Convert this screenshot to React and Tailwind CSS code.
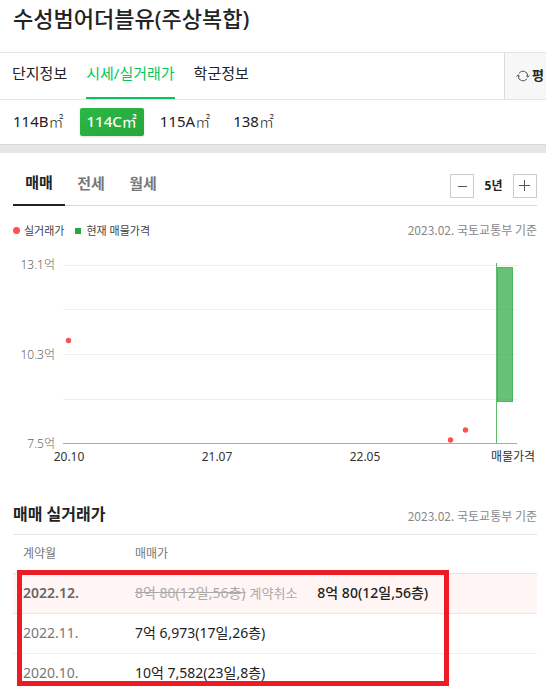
import React from "react";

const mainTabs = ["단지정보", "시세/실거래가", "학군정보"];
const areas = ["114B", "114C", "115A", "138"];
const gridLines = [20, 64, 109, 154];
const yLabels = [
  { y: 24, text: "13.1억" },
  { y: 114, text: "10.3억" },
  { y: 203, text: "7.5억" },
];
const xLabels = [
  { x: 69, text: "20.10" },
  { x: 217, text: "21.07" },
  { x: 365, text: "22.05" },
  { x: 513, text: "매물가격" },
];
const deals = [
  { x: 68.5, y: 95.5 },
  { x: 450.5, y: 195 },
  { x: 465.5, y: 185 },
];

function RefreshIcon() {
  return (
    <svg viewBox="0 0 14 14" className="size-[14px] shrink-0" fill="none" stroke="#555" aria-hidden="true">
      <path d="M2.2 6V7A4.8 4.8 0 0 0 11 9.7M11.8 8V7A4.8 4.8 0 0 0 3 4.3" strokeWidth="1" />
      <path d="M0.6 7.4L2.2 5.8L3.8 7.4M10.2 6.6L11.8 8.2L13.4 6.6" strokeWidth="1" />
    </svg>
  );
}

function SourceDate() {
  return (
    <span className="font-['Noto_Sans_CJK_KR',sans-serif] text-[12px] leading-5 text-[#888]">
      2023.02. 국토교통부 기준
    </span>
  );
}

function Chart() {
  return (
    <svg viewBox="0 0 546 230" className="block w-full" role="img" aria-label="실거래가">
      {gridLines.map((y) => (
        <rect key={y} x="63" y={y} width="454" height="1" fill="#eee" />
      ))}
      <rect x="63" y="198" width="454" height="1" fill="#aaa" />
      <rect x="496" y="18" width="1" height="180" fill="#5cbe6d" />
      <rect x="497" y="22" width="16" height="135" fill="#28a83c" fillOpacity="0.7" />
      <rect x="497.5" y="22.5" width="15" height="134" fill="none" stroke="#28a83c" strokeOpacity="0.4" />
      {deals.map((d) => (
        <circle key={d.x} cx={d.x} cy={d.y} r="2.7" fill="#ff5050" />
      ))}
      {yLabels.map((l) => (
        <text key={l.text} x="55" y={l.y} textAnchor="end" fontSize="12" fill="#666" className="font-light">
          {l.text}
        </text>
      ))}
      {xLabels.map((l) => (
        <text key={l.text} x={l.x} y="216" textAnchor="middle" fontSize="12" fill="#333">
          {l.text}
        </text>
      ))}
    </svg>
  );
}

export default function App() {
  return (
    <div className="relative flex h-screen flex-col overflow-hidden bg-white font-['Noto_Sans','Noto_Sans_CJK_KR',sans-serif] text-[#222]">
      <header className="flex h-[53px] shrink-0 items-start border-b border-[#e5e5e5] px-[13px] pt-0.5">
        <h1 className="text-[22px] leading-8 font-medium">수성범어더블유(주상복합)</h1>
      </header>

      <nav className="flex h-[47px] shrink-0 border-b border-[#e5e5e5] pl-3">
        <div className="flex gap-[19px]">
          {mainTabs.map((t, i) => (
            <a
              key={t}
              href="#"
              className={
                i === 1
                  ? "border-b-2 border-[#03c75a] pt-2 text-[15px] leading-6 text-[#03c75a]"
                  : "pt-2 text-[15px] leading-6"
              }
            >
              {t}
            </a>
          ))}
        </div>
        <button className="ml-auto flex w-[42px] items-center gap-0.5 border-l border-[#ddd] bg-[#f7f7f7] pl-[11px] text-[13px] font-bold">
          <RefreshIcon />평
        </button>
      </nav>

      <div className="flex h-[45px] shrink-0 items-center gap-[9px] border-b border-[#d5d7d9] pl-1.5">
        {areas.map((a, i) => (
          <button
            key={a}
            className={
              i === 1
                ? "h-7 rounded-xs bg-linear-to-br from-[#2ab943] to-[#28a53c] px-[7px] pb-0.5 text-[15px] leading-6 font-medium text-white shadow-sm"
                : "h-7 px-[7px] pb-0.5 text-[15px] leading-6"
            }
          >
            {a}
            <span className={i === 1 ? "font-normal" : "font-light"}>㎡</span>
          </button>
        ))}
      </div>
      <div className="h-2 shrink-0 bg-[#e5e6e8]" />

      <section className="shrink-0">
        <div className="mr-[9px] ml-[13px] flex h-[53px] items-end border-b border-[#d8d8d8]">
          <div className="flex h-full">
            <button className="-mb-px w-[52px] border-b-2 border-[#222] pt-2 text-[15px] font-bold">매매</button>
            <button className="w-[52px] pt-2 text-[15px] font-bold text-[#777]">전세</button>
            <button className="w-[52px] pt-2 text-[15px] font-bold text-[#777]">월세</button>
          </div>
          <div className="mb-[7px] ml-auto flex items-center">
            <button aria-label="-" className="flex size-6 items-center justify-center border border-[#ccc]">
              <span className="h-px w-[9px] bg-[#555]" />
            </button>
            <span className="w-[39px] text-center text-[12px] font-bold">5년</span>
            <button aria-label="+" className="flex size-6 items-center justify-center border border-[#ccc]">
              <svg viewBox="0 0 12 12" className="size-3" shapeRendering="crispEdges" aria-hidden="true">
                <path d="M0 5h11v1H0zM5 0h1v11H5z" fill="#555" />
              </svg>
            </button>
          </div>
        </div>
        <div className="mr-[9px] ml-[13px] flex h-[39px] items-center pt-2.5 text-[11px] leading-5 text-[#444]">
          <span className="mr-1 size-[7px] rounded-full bg-[#ff5050]" />
          실거래가
          <span className="mr-[5px] ml-[11px] size-1.5 bg-[#28a83c]" />
          현재 매물가격
          <span className="ml-auto"><SourceDate /></span>
        </div>
        <Chart />
      </section>

      <section className="relative mr-[9px] ml-[13px] shrink-0">
        <div className="flex h-[59px] items-end justify-between pb-2">
          <h2 className="text-[16px] leading-6 font-bold">매매 실거래가</h2>
          <SourceDate />
        </div>
        <table className="w-full table-fixed border-collapse text-left text-[14px] leading-5">
          <thead>
            <tr className="h-[39px] border-t border-[#e5e5e5] text-[12px] text-[#777]">
              <th className="w-28 pl-2.5 font-normal">계약월</th>
              <th className="pl-2.5 font-normal">매매가</th>
            </tr>
          </thead>
          <tbody>
            <tr className="h-10 border-y border-[#f8dede] bg-[#fff5f4]">
              <td className="pb-0.5 pl-2.5 font-semibold text-[#666]">2022.12.</td>
              <td className="pb-0.5 pl-2.5">
                <span className="text-[#aaa]">
                  <del>8억 80(12일,56층)</del>
                  <span className="ml-1 text-[13px]">계약취소</span>
                </span>
                <span className="ml-5 font-medium">8억 80(12일,56층)</span>
              </td>
            </tr>
            <tr className="h-10 border-b border-[#eee]">
              <td className="pb-0.5 pl-2.5 text-[#777]">2022.11.</td>
              <td className="pb-0.5 pl-2.5">7억 6,973(17일,26층)</td>
            </tr>
            <tr className="h-10 border-b border-[#eee]">
              <td className="pb-0.5 pl-2.5 text-[#777]">2020.10.</td>
              <td className="pb-0.5 pl-2.5">10억 7,582(23일,8층)</td>
            </tr>
          </tbody>
        </table>
        <div className="pointer-events-none absolute top-[95px] left-1 h-[116px] w-[432px] border-5 border-[#ed1c24]" />
      </section>
    </div>
  );
}
